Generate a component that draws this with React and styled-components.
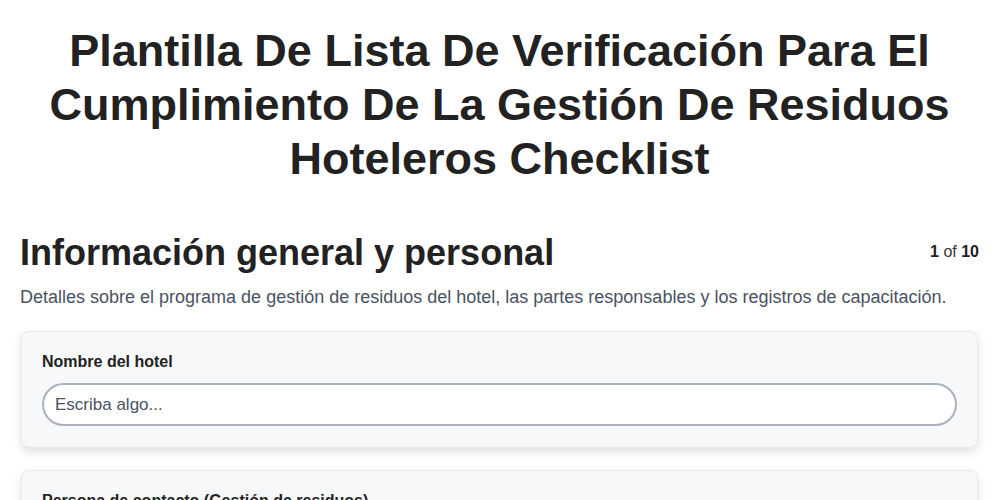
import styled, { createGlobalStyle } from 'styled-components';

const GlobalStyle = createGlobalStyle`
  body {
    margin: 0;
    background: #fff;
    font-family: "Liberation Sans", Arial, sans-serif;
    color: #222;
  }
`;

const fields = [
  { id: 1, label: 'Nombre del hotel' },
  { id: 2, label: 'Persona de contacto (Gestión de residuos)' },
];

const App = () => {
  return (
    <>
      <GlobalStyle />
      <Page>
        <Title>
          Plantilla De Lista De Verificación Para El Cumplimiento De La Gestión De Residuos Hoteleros Checklist
        </Title>
        <SectionHeader>
          <SectionTitle>Información general y personal</SectionTitle>
          <Pager>
            <b>1</b> of <b>10</b>
          </Pager>
        </SectionHeader>
        <Description>
          Detalles sobre el programa de gestión de residuos del hotel, las partes responsables y los registros de capacitación.
        </Description>
        <CardList>
          {fields.map((item) => (
            <Card key={item.id}>
              <Label>{item.label}</Label>
              <TextInput placeholder="Escriba algo..." />
            </Card>
          ))}
        </CardList>
      </Page>
    </>
  );
};

export default App;

const Page = styled.div`
  padding: 24px 21px 40px 20px;
`;
const Title = styled.h1`
  margin: 0 auto;
  max-width: 920px;
  text-align: center;
  font-size: 45px;
  line-height: 54px;
  font-weight: 700;
  color: #222;
`;
const SectionHeader = styled.div`
  display: flex;
  justify-content: space-between;
  align-items: center;
  margin-top: 45px;
`;
const SectionTitle = styled.h2`
  margin: 0;
  font-size: 36px;
  line-height: 43px;
  font-weight: 700;
  color: #222;
`;
const Pager = styled.div`
  font-size: 16px;
  color: #333;
  margin-top: -2px;
  b {
    color: #222;
  }
`;
const Description = styled.p`
  margin: 11px 0 0;
  font-size: 18px;
  line-height: 24px;
  color: #4a5261;
`;
const CardList = styled.div`
  display: flex;
  flex-direction: column;
  gap: 22px;
  margin-top: 22px;
`;
const Card = styled.div`
  background: #f7f8fa;
  border: 1px solid #e6e8ec;
  border-radius: 8px;
  box-shadow: 0 4px 10px rgba(0, 0, 0, 0.12);
  padding: 20px 20px 21px;
  margin: 0 1px;
`;
const Label = styled.div`
  font-size: 16px;
  font-weight: 700;
  color: #222;
  line-height: 20px;
`;
const TextInput = styled.input`
  display: block;
  box-sizing: border-box;
  width: 100%;
  height: 43px;
  margin-top: 11px;
  padding: 0 11px;
  border: 2px solid #a9b2bc;
  border-radius: 22px;
  background: #fff;
  font-family: "Liberation Sans", Arial, sans-serif;
  font-size: 17px;
  outline: none;
  &::placeholder {
    color: #4a5261;
  }
`;
